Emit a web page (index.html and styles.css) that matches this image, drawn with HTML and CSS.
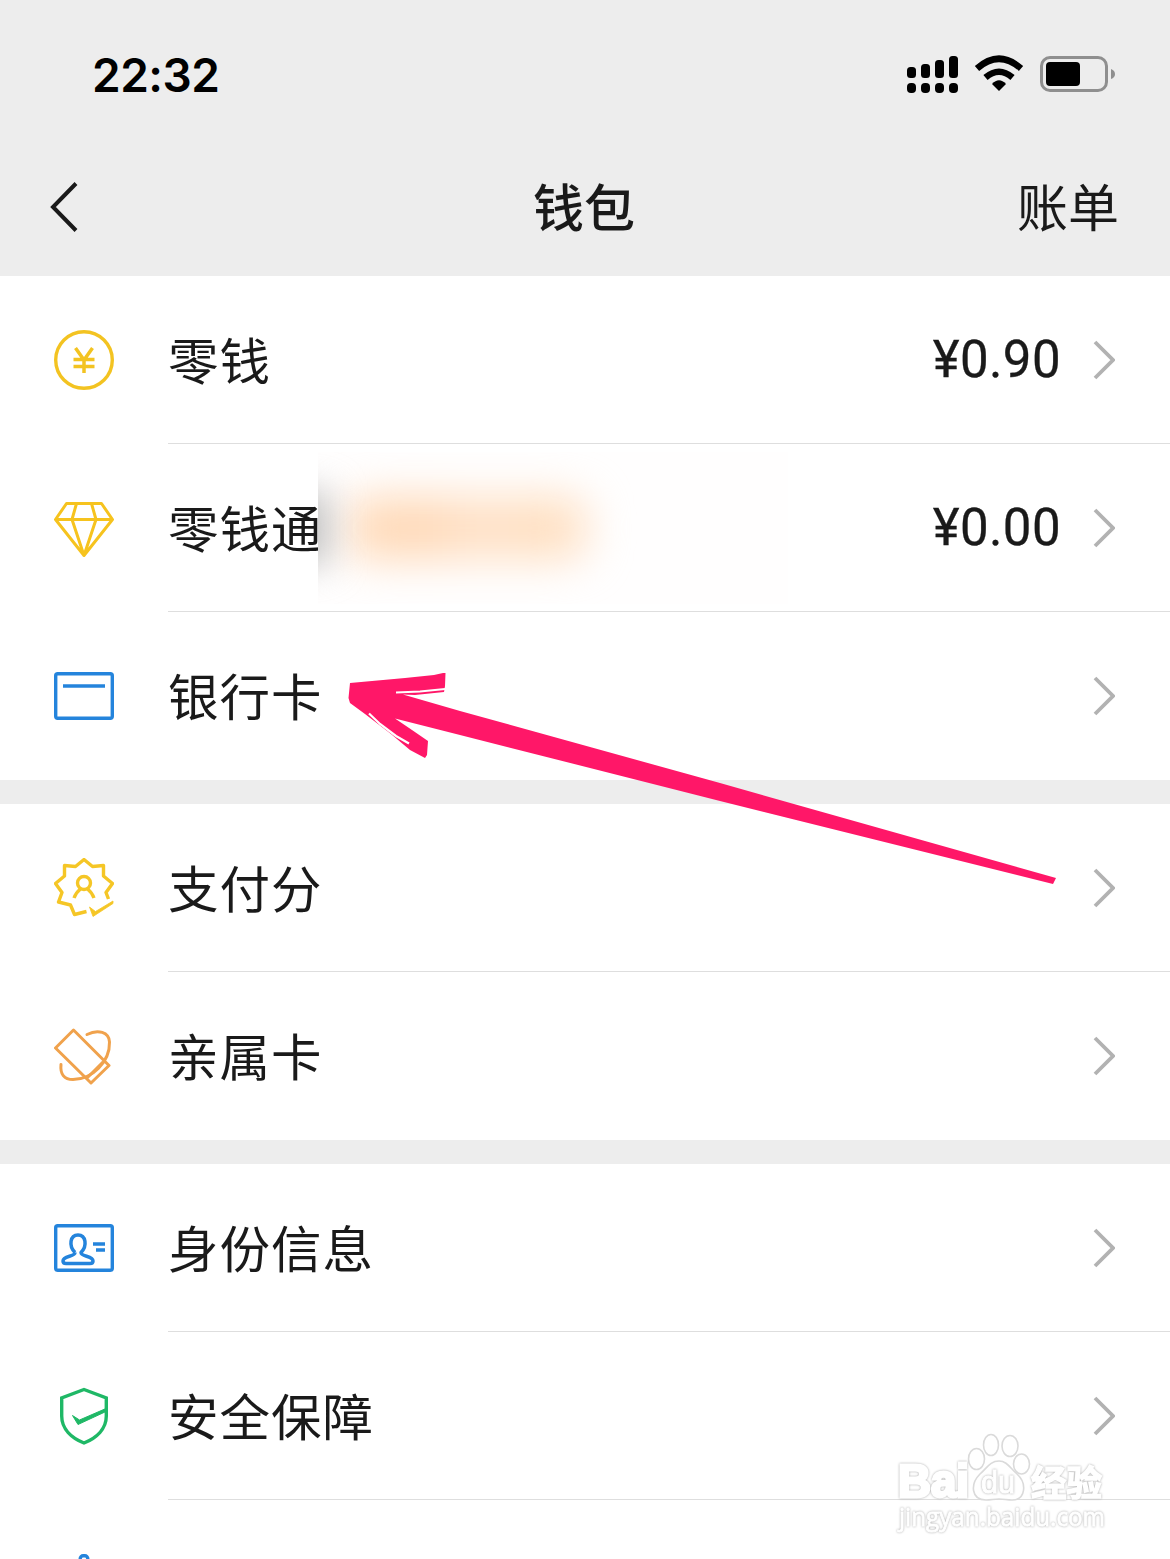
FILE: index.html
```html
<!DOCTYPE html>
<html lang="zh-CN">
<head>
<meta charset="utf-8">
<title>钱包</title>
<link rel="stylesheet" href="styles.css">
</head>
<body>
<div class="screen">
  <header class="header">
    <div class="status">
      <span class="time">22:32</span>
      <svg class="status-icons" width="210" height="42" viewBox="905 54 210 42">
        <g>
          <rect x="907" y="67" width="9" height="11" rx="3.5"/><rect x="921" y="64" width="9" height="14" rx="3.5"/><rect x="935" y="60" width="9" height="18" rx="3.5"/><rect x="949" y="56" width="9" height="22" rx="3.5"/>
          <rect x="907" y="83" width="9" height="10" rx="4"/><rect x="921" y="83" width="9" height="10" rx="4"/><rect x="935" y="83" width="9" height="10" rx="4"/><rect x="949" y="83" width="9" height="10" rx="4"/>
        </g>
        <path d="M977 68.500Q999 49 1021 68.500M985.500 77.500Q999 66 1012.500 77.500" fill="none" stroke="#000" stroke-width="6.500"/>
        <path d="M992 84Q999 76.500 1006 84L999 91Z"/>
        <rect x="1041.500" y="57.500" width="65" height="33" rx="8.500" fill="none" stroke="#8f8f8f" stroke-width="3"/>
        <rect x="1046" y="62" width="34" height="24" rx="4"/>
        <path d="M1111 69q4 1.500 4 5t-4 5z" fill="#8f8f8f"/>
      </svg>
    </div>
    <nav class="nav">
      <svg class="back" width="30" height="54" viewBox="0 0 30 54"><path d="M27 3.500 4 27l23 23.500" fill="none" stroke="#1a1a1a" stroke-width="4"/></svg>
      <h1>钱包</h1>
      <a class="bill">账单</a>
    </nav>
  </header>

  <main>
    <section class="group">
      <div class="row">
        <svg class="icon" viewBox="0 0 60 60" stroke="#f3c321"><circle cx="30" cy="30" r="28.300"/><path d="M21.500 18 30 30l8.500-12M30 29v14M19.500 29.500h21M19.500 36.500h21" stroke-width="3.500"/></svg>
        <div class="body"><span class="label">零钱</span><span class="amount">¥0.90</span><svg class="chevron" viewBox="0 0 22 40"><path d="m2 2 18 18L2 38"/></svg></div>
      </div>
      <div class="row">
        <svg class="icon thin" viewBox="0 0 60 60" stroke="#f6c31e"><path d="M12.500 5.500h35L58.500 21.500 30 57.500 1.500 21.500ZM1.500 21.500h57M22.500 5.500 18 21.500l12 36 12-36-4.500-16"/></svg>
        <div class="body"><span class="label">零钱通</span><span class="amount">¥0.00</span><svg class="chevron" viewBox="0 0 22 40"><path d="m2 2 18 18L2 38"/></svg>
          <span class="smudge"></span></div>
      </div>
      <div class="row">
        <svg class="icon" viewBox="0 0 60 60" stroke="#2484dc"><rect x="1.700" y="7.700" width="56.600" height="44.600" rx="2"/><path d="M9 20h42"/></svg>
        <div class="body"><span class="label">银行卡</span><svg class="chevron" viewBox="0 0 22 40"><path d="m2 2 18 18L2 38"/></svg></div>
      </div>
    </section>

    <section class="group">
      <div class="row">
        <svg class="icon" viewBox="0 0 60 60" stroke="#f5c626"><path d="m32.500 53.500-12 3-4-9.500-12-3L8 34.500 1.500 25.500l9-7.500V7.500l11 1L30 1.500l8.500 7 11-1V18l9 7.500L52 34.500l2.500 6.500"/><circle cx="30" cy="25" r="6.500"/><path d="M26.500 31Q22 34.500 20 40M33.500 31Q38 34.500 40 40"/><path d="m35.500 49 6 4.500L59 43v2.500L39 58.500Z" fill="#f5c626" stroke-width=".8"/></svg>
        <div class="body"><span class="label">支付分</span><svg class="chevron" viewBox="0 0 22 40"><path d="m2 2 18 18L2 38"/></svg></div>
      </div>
      <div class="row">
        <svg class="icon thin" viewBox="0 0 60 60" stroke="#f0a24c"><path d="M19.500 4 55 39.500 37 57 1.500 22ZM49 36 32.500 52.500"/><path d="M33 8.500C44 3 55 6 55.500 16 56 36 38 53.500 19 53.500 10 53.500 6 48 7 38.500" stroke-linecap="round"/></svg>
        <div class="body"><span class="label">亲属卡</span><svg class="chevron" viewBox="0 0 22 40"><path d="m2 2 18 18L2 38"/></svg></div>
      </div>
    </section>

    <section class="group">
      <div class="row">
        <svg class="icon" viewBox="0 0 60 60" stroke="#2484dc"><rect x="1.700" y="7.700" width="56.600" height="44.600" rx="2"/><path d="M21 34.500C14.500 28 16 17 24 17s9.500 11 3 17.500C27 39 39 37.500 39 43q0 2.500-3 2.500H12q-3 0-3-2.500c0-5.500 12-4 12-8.500M39 26h12M42 32h9" stroke-width="3.500"/></svg>
        <div class="body"><span class="label">身份信息</span><svg class="chevron" viewBox="0 0 22 40"><path d="m2 2 18 18L2 38"/></svg></div>
      </div>
      <div class="row">
        <svg class="icon" viewBox="0 0 60 60" stroke="#1fb866"><path d="M30 3.500 52.300 12v18c0 13-10 22-22.300 27C17.700 52 7.700 43 7.700 30V12Z" stroke-linejoin="miter"/><path d="m18.500 29.500 7 4.500L52 22.500v3L24 38.500Z" fill="#1fb866" stroke-width="1"/></svg>
        <div class="body"><span class="label">安全保障</span><svg class="chevron" viewBox="0 0 22 40"><path d="m2 2 18 18L2 38"/></svg></div>
      </div>
      <div class="row">
        <svg class="icon" viewBox="0 0 60 60" stroke="#2484dc"><rect x="26.200" y="1.800" width="7.600" height="10" rx="3"/></svg>
        <div class="body"></div>
      </div>
    </section>
  </main>

  <svg class="arrow" width="712" height="216" viewBox="346 670 712 216">
    <path fill="#ff1768" d="M350 683 405 678 434 675 443 673H445.500L445 686 444 692 415 695 403 694.500 460 711 720 783 1056 878 1053 884 720 801 460 735 395 718.500 412 730 428 741 427 755 425 758 410 750 391 734 365 714 350 703 348.500 698Z"/>
    <path fill="none" stroke="#fff" stroke-width="1.800" d="M396 692.500 420 691.500 445 689"/>
    <path fill="none" stroke="#fff" stroke-width="2.200" d="M369 713.500 380 724 396 736 409 743.500"/>
  </svg>

  <svg class="watermark" width="240" height="125" viewBox="890 1430 240 125">
    <g fill="#fff" stroke="#dadada" stroke-width="1.600">
      <ellipse cx="976.500" cy="1459" rx="8" ry="10.500"/><ellipse cx="991" cy="1445" rx="7.500" ry="10.500"/><ellipse cx="1010" cy="1446" rx="8" ry="10.500"/><ellipse cx="1021.500" cy="1464" rx="8" ry="10"/>
      <path d="M999 1461c8 0 11 7 18 13 10 9 9 26-5 26-5 0-8-1-13-1s-8 1-13 1c-15 0-16-16-6-26 7-6 10-13 19-13Z"/>
    </g>
    <g class="wm-text">
      <text class="wm-brand" x="898" y="1497" textLength="71" lengthAdjust="spacingAndGlyphs">Bai</text>
      <text class="wm-du" x="981" y="1493" textLength="34" lengthAdjust="spacingAndGlyphs">du</text>
      <text class="wm-cn" x="1031" y="1496" textLength="71" lengthAdjust="spacingAndGlyphs">经验</text>
      <text class="wm-url" x="899" y="1526" textLength="206" lengthAdjust="spacingAndGlyphs">jingyan.baidu.com</text>
    </g>
  </svg>
</div>
</body>
</html>
```
FILE: styles.css
```css
* { box-sizing: border-box; }

body {
  margin: 0;
  background: #ededed;
  color: #1a1a1a;
  font-family: "Noto Sans CJK SC", sans-serif;
}

.screen {
  position: relative;
  width: 1170px;
  height: 1559px;
  overflow: hidden;
}

.header { height: 276px; }

.status {
  display: flex;
  justify-content: space-between;
  align-items: center;
  height: 138px;
  padding: 12px 55px 0 92px;
}

.time {
  padding-bottom: 1px;
  color: #000;
  font: 600 46px/1 Inter, sans-serif;
  letter-spacing: -.5px;
}

.nav {
  display: grid;
  grid-template-columns: 1fr auto 1fr;
  align-items: center;
  height: 138px;
  padding: 0 51px 0 49px;
}

.nav h1,
.bill {
  margin: 0;
  padding-bottom: 4px;
  font-size: 51px;
  line-height: 60px;
}

.nav h1 { font-weight: 500; }

.bill {
  justify-self: end;
  font-weight: 400;
}

main {
  display: flex;
  flex-direction: column;
  gap: 24px;
}

.group { background: #fff; }

.row {
  display: flex;
  height: 168px;
  padding-left: 54px;
  align-items: center;
}

.icon {
  flex: none;
  width: 60px;
  height: 60px;
  margin-right: 54px;
  fill: none;
  stroke-width: 3.4;
  stroke-linejoin: round;
}

.icon.thin { stroke-width: 3; }

.body {
  position: relative;
  flex: 1;
  display: flex;
  align-items: center;
  height: 100%;
  padding-right: 55px;
  border-bottom: 1px solid #dedede;
}

.row:last-child .body { border-bottom: 0; }

.label {
  flex: 1;
  padding-bottom: 4px;
  font-size: 50.5px;
  line-height: 60px;
  letter-spacing: 1px;
}

.amount {
  padding-top: 1px;
  font: 400 51px/60px Roboto, sans-serif;
  letter-spacing: .4px;
  -webkit-text-stroke: .3px #1a1a1a;
}

.chevron {
  width: 22px;
  height: 40px;
  margin-left: 32px;
  fill: none;
  stroke: #b2b2b2;
  stroke-width: 3.8;
}

/* Blurred-out promotional text beside the label */
.smudge {
  position: absolute;
  left: 150px;
  top: 8px;
  width: 470px;
  height: 152px;
  overflow: hidden;
  background: #fffefe;
}

.smudge::before,
.smudge::after {
  content: "";
  position: absolute;
}

.smudge::before {
  left: 30px;
  top: 44px;
  width: 240px;
  height: 64px;
  border-radius: 20px;
  background: linear-gradient(90deg, #ffdcbc, #ffd9b8 30%, #ffe3ca 58%, #ffdfc0 80%, #ffe4cc);
  filter: blur(21px);
}

.smudge::after {
  left: -40px;
  top: 40px;
  width: 50px;
  height: 72px;
  background: #bdbdbd;
  filter: blur(18px);
}

.arrow {
  position: absolute;
  left: 346px;
  top: 670px;
}

.watermark {
  position: absolute;
  left: 890px;
  top: 1430px;
}

.wm-text {
  fill: #fff;
  stroke: #fff;
  filter: drop-shadow(0 0 .8px #aaa);
}

.wm-brand {
  font: 700 46px "Liberation Sans", sans-serif;
  stroke-width: 3px;
}

.wm-du {
  font: 400 32px "Liberation Sans", sans-serif;
  stroke-width: 1px;
}

.wm-cn {
  font: 700 35px "Noto Sans CJK SC", sans-serif;
  stroke-width: 1.5px;
}

.wm-url {
  font: 400 25px "Open Sans", sans-serif;
  stroke-width: .8px;
}
```
